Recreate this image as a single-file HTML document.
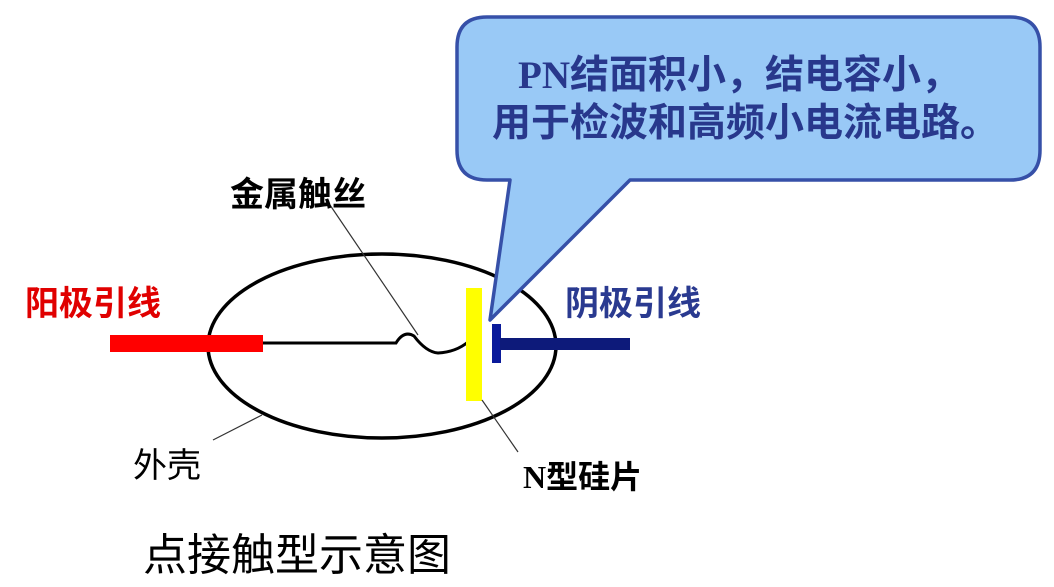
<!DOCTYPE html>
<html><head><meta charset="utf-8"><style>
html,body{margin:0;padding:0;background:#fff;width:1054px;height:587px;overflow:hidden}
svg{display:block}
text{font-family:"Liberation Serif","Noto Sans CJK SC",sans-serif}
</style></head><body>
<svg width="1054" height="587" viewBox="0 0 1054 587">
<ellipse cx="382" cy="346" rx="174" ry="92" fill="none" stroke="#000" stroke-width="3.5"/>
<path d="M263 343 H396 Q404 330 414 336 Q426 352 438 353 Q456 352 468 342" fill="none" stroke="#000" stroke-width="3"/>
<rect x="110" y="335" width="153" height="17" fill="#f00"/>
<rect x="466" y="288" width="16" height="113" fill="#ffff00"/>
<rect x="492" y="324" width="9" height="39" fill="#0a1a9a"/>
<rect x="500" y="338" width="130" height="12" fill="#0d1a7a"/>
<line x1="330" y1="205" x2="418" y2="335" stroke="#333" stroke-width="1.2"/>
<line x1="213" y1="440" x2="262" y2="415" stroke="#333" stroke-width="1.2"/>
<line x1="482" y1="400" x2="518" y2="452" stroke="#333" stroke-width="1.2"/>
<path d="M487 17 H1010 Q1040 17 1040 47 V150 Q1040 180 1010 180 H630 L490 320 L510 180 H487 Q457 180 457 150 V47 Q457 17 487 17 Z" fill="#99c9f6" stroke="#3650a8" stroke-width="3.5" stroke-linejoin="round"/>
<g font-weight="bold" fill="#28388c" font-size="39">
<text x="518" y="88">PN结面积小，结电容小，</text>
<text x="492" y="136">用于检波和高频小电流电路。</text>
</g>
<text x="25" y="315" font-size="34" fill="#e00000" font-weight="bold">阳极引线</text>
<text x="565" y="315" font-size="34" fill="#2a3a90" font-weight="bold">阴极引线</text>
<text x="230" y="206" font-size="34" fill="#000" font-weight="bold">金属触丝</text>
<text x="133" y="477" font-size="34" fill="#000">外壳</text>
<text x="523" y="488" font-size="32" fill="#000" font-weight="bold">N型硅片</text>
<text x="143" y="570" font-size="44" fill="#000">点接触型示意图</text>
</svg>
</body></html>
